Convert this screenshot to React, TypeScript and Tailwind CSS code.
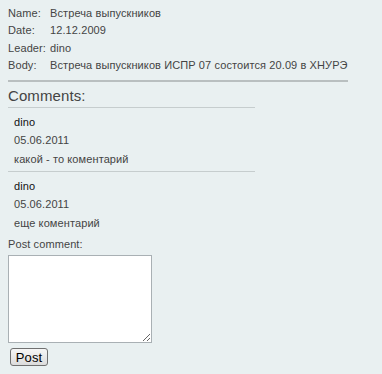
export default function App() {
  const info = [
    ["Name:", "Встреча выпускников"],
    ["Date:", "12.12.2009"],
    ["Leader:", "dino"],
    ["Body:", "Встреча выпускников ИСПР 07 состоится 20.09 в ХНУРЭ"],
  ];
  const comments = [
    { author: "dino", date: "05.06.2011", text: "какой - то коментарий" },
    { author: "dino", date: "05.06.2011", text: "еще коментарий" },
  ];

  return (
    <div className="w-[382px] h-[374px] bg-[#e9f0f1] text-[11px] tracking-[0.1px] text-[#444] font-['Liberation_Sans',Arial,sans-serif] pl-2 pt-[4px]">
      <div className="flex flex-col">
        {info.map(([label, value]) => (
          <div key={label} className="flex h-[17.5px] items-center">
            <span className="w-[42px] shrink-0">{label}</span>
            <span>{value}</span>
          </div>
        ))}
      </div>
      <div className="mt-[6px] w-[340px] h-[2px] bg-[#b9bfc0]" />
      <div className="mt-[5px] text-[15px] leading-[18px] text-[#444]">Comments:</div>
      <div className="mt-[2px] w-[247px] h-px bg-[#c6cdce]" />
      {comments.map((c, i) => (
        <div key={i}>
          <div className="pl-[6px] pt-[5px]">
            <div className="h-[18px] flex items-center text-[#111]">{c.author}</div>
            <div className="h-[19px] flex items-center">{c.date}</div>
            <div className="h-[19px] flex items-center">{c.text}</div>
          </div>
          {i === 0 && <div className="mt-[2px] w-[247px] h-px bg-[#c6cdce]" />}
        </div>
      ))}
      <div className="h-[17px] flex items-center mt-[3px]">Post comment:</div>
      <textarea className="block mt-[2px] w-[144px] h-[88px] bg-white border border-[#a9b0b4] resize" />
      <button className="mt-[5px] ml-[2px] h-[18px] w-[38px] text-[13px] leading-none text-black border border-[#707070] rounded-[3px] bg-gradient-to-b from-[#f6f6f6] to-[#dcdcdc]">
        Post
      </button>
    </div>
  );
}
